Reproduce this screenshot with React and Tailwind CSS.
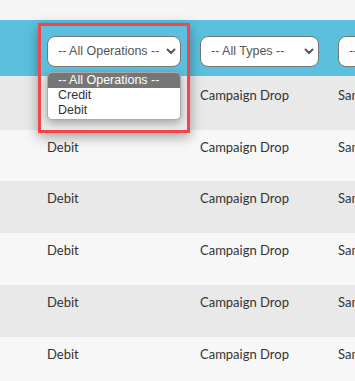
import React from 'react';

const ROWS = [
  { h: 'h-[54px]', pt: 'pt-[10px]', bg: 'bg-[#e9e9e9]' },
  { h: 'h-[51px]', pt: 'pt-[8px]', bg: 'bg-[#f7f7f7]' },
  { h: 'h-[52px]', pt: 'pt-[8px]', bg: 'bg-[#e9e9e9]' },
  { h: 'h-[52px]', pt: 'pt-[8px]', bg: 'bg-[#f7f7f7]' },
  { h: 'h-[52px]', pt: 'pt-[8px]', bg: 'bg-[#e9e9e9]' },
  { h: 'h-[52px]', pt: 'pt-[8px]', bg: 'bg-[#f7f7f7]' },
];

function Chevron() {
  return (
    <svg width="10" height="7" viewBox="0 0 10 7" className="shrink-0">
      <path d="M1.5 1.5 L5 5 L8.5 1.5" fill="none" stroke="#555" strokeWidth="2" strokeLinecap="round" strokeLinejoin="round" />
    </svg>
  );
}

function FakeSelect({ label, className }) {
  return (
    <div className={`h-[31px] bg-white border border-[#767676] rounded-[8px] flex items-center justify-between pl-[10px] pr-[4px] text-[12.5px] text-[#555] ${className}`}>
      <span className="whitespace-nowrap">{label}</span>
      <Chevron />
    </div>
  );
}

export default function App() {
  return (
    <div className="w-[355px] h-[381px] overflow-hidden bg-[#f5f5f5] relative" style={{ fontFamily: 'Lato, "Noto Sans", sans-serif' }}>
      <div className="w-[520px] mt-[20px]">
        {/* Filter header */}
        <div className="h-[56px] bg-[#5bc0de] grid grid-cols-[47px_153px_138px_1fr] pt-[16px]" style={{ fontFamily: '"Liberation Sans", Arial, sans-serif' }}>
          <div />
          <div className="relative">
            <FakeSelect label="-- All Operations --" className="w-[134px]" />
            {/* open list */}
            <div className="absolute left-0 top-[36px] w-[134px] bg-white border border-[#a9a9a9] rounded-[5px] overflow-hidden shadow-[0_3px_8px_rgba(0,0,0,0.3)] z-10 text-[12.5px] leading-[15px] pb-[1px]">
              <div className="bg-[#767676] text-white pl-[10px]">-- All Operations --</div>
              <div className="text-[#333] pl-[10px]">Credit</div>
              <div className="text-[#333] pl-[10px]">Debit</div>
            </div>
          </div>
          <div>
            <FakeSelect label="-- All Types --" className="w-[119px]" />
          </div>
          <div>
            <FakeSelect label="-- All Campaigns --" className="w-[150px]" />
          </div>
        </div>

        {/* Rows */}
        {ROWS.map((r, i) => (
          <div key={i} className={`grid grid-cols-[47px_153px_138px_1fr] ${r.h} ${r.pt} ${r.bg} text-[13px] leading-[18px] text-[#333]`}>
            <div />
            <div>Debit</div>
            <div>Campaign Drop</div>
            <div className="whitespace-nowrap">Sample Campaign</div>
          </div>
        ))}
      </div>

      {/* annotation box */}
      <div className="absolute left-[38px] top-[23px] w-[152px] h-[110px] border-[3px] border-[#f2464a] shadow-[0_4px_12px_rgba(0,0,0,0.35)] z-20 pointer-events-none" />
    </div>
  );
}
